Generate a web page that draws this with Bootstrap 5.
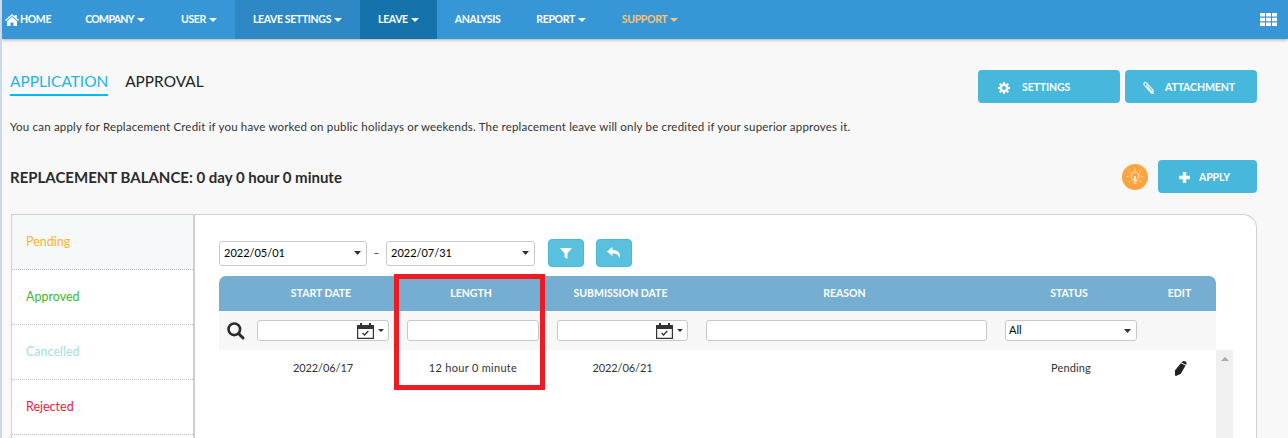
<!DOCTYPE html>
<html lang="en">
<head>
<meta charset="utf-8">
<title>Replacement Leave</title>
<link href="https://cdn.jsdelivr.net/npm/bootstrap@5.3.0/dist/css/bootstrap.min.css" rel="stylesheet">
<style>
html,body{height:438px;overflow:hidden}
body{background:#f8f8f8;font-family:"Lato","Liberation Sans",sans-serif;font-size:11px;color:#333;border-left:2px solid #cdd8ea}
.topbar{height:39px;background:#3797d6;box-shadow:0 1px 3px rgba(0,0,0,.3);padding:0}
.topitem{height:39px;padding:0 18px;color:#fff;font-size:10.5px;letter-spacing:-.35px;font-weight:700;display:flex;align-items:center;gap:3px;text-decoration:none;white-space:nowrap}
.topitem:hover{color:#fff}
.item-home{padding:0 16px 0 3px;gap:1px}
.item-tight{letter-spacing:-.65px}
.item-soft{background:#2e88c6}
.item-strong{background:#1572ab}
.item-gold,.item-gold:hover{color:#f8c471}
.tri{width:0;height:0;border-left:4px solid transparent;border-right:4px solid transparent;border-top:4px solid currentColor}
.appgrid{padding-right:11px}
.pagehead{padding:31px 31px 0 8px}
.tabname{font-size:15.4px;line-height:22px;padding-bottom:2px;color:#222;text-decoration:none}
.tabname.on{color:#1cb4e6;border-bottom:2px solid #00bdf2}
.gap-tab{gap:17px}
.actbtn{height:33px;background:#47b8db;border:0;border-radius:4px;color:#fff;font-size:10.5px;letter-spacing:-.1px;font-weight:700;display:flex;align-items:center;padding:2px 0 0 20px;gap:12px}
.actbtn:hover{background:#47b8db;color:#fff}
.w-settings{width:142px}
.w-attach{width:132px;padding-left:18px;gap:10px}
.w-apply{width:99px;padding-left:21px;gap:9px}
.gap-act{gap:5px}
.infotext{margin:16px 0 0 8px;line-height:16px;font-size:11.5px;letter-spacing:.19px}
.balance{padding:0 31px 0 8px;margin-top:25px;height:33px}
.balance h5{font-size:15px;font-weight:700;margin:0;color:#2b2b2b}
.bulb{width:26px;height:26px;border-radius:50%;background:#fda43f;margin-right:10px}
.panelbox{margin:21px 0 0 9px;width:1246px;height:224px;background:#fff;border:1px solid #d0d0d0;border-bottom:0;border-radius:0 14px 0 0;display:flex}
.sidelist{width:183px;flex:none;border-right:2px solid #d0d0d0;border-radius:0}
.sidelist .list-group-item{height:55px;padding:1px 0 0 14px;border:0;border-bottom:1px dotted #bbb;display:flex;align-items:center;font-size:12.5px;background:transparent;border-radius:0}
.sidelist .list-group-item.cur{background:#f6f9fa}
.sidelist .list-group-item.c-pend{color:#ffb32c}.sidelist .list-group-item.c-appr{color:#3cb82e}.sidelist .list-group-item.c-canc{color:#a6dedb}.sidelist .list-group-item.c-rej{color:#f0193c}
.mainpane{padding:24px 0 0 24px;flex:1;min-width:0}
.filterline{height:28px}
.datepick,.fsel{font-size:11px;border:1px solid #c8c8c8;border-radius:3px;color:#000;background-position:right 5px center;background-size:7px 4px;box-shadow:none;background-image:url("data:image/svg+xml,%3Csvg xmlns='http://www.w3.org/2000/svg' viewBox='0 0 7 4'%3E%3Cpath fill='%23333' d='M0 0h7L3.500 4z'/%3E%3C/svg%3E")}
.datepick{height:25px;padding:0 20px 0 4px}
.fsel{height:21px;padding:0 20px 0 3px}
.w-date{width:148px}
.w-date2{width:149px}
.dash{width:19px;text-align:center;color:#444}
.iconbtn{width:36px;height:28px;padding:0;background:#5bc0de;border:1px solid #46b8da;border-radius:4px;display:flex;align-items:center;justify-content:center}
.iconbtn:hover{background:#5bc0de;border-color:#46b8da}
.first-ic{margin-left:13px}
.second-ic{margin-left:12px}
.tablewrap{width:1014px;margin-top:9px}
.gridline{display:grid;grid-template-columns:20px 132px 132px 131px 281px 132px 61px;column-gap:18px;width:997px;align-items:center;text-align:center}
.headline{height:35px;background:#76aed2;color:#fff;font-weight:700;font-size:10.5px;border-radius:7px 7px 0 0;padding-top:1px}
.headline span{padding-right:4px}
.headline .hd-edit{padding-right:12px}
.searchline{height:39px;background:#f7f7f7}
.datarow{height:36px;color:#333;letter-spacing:.15px;flex:none}
.datecell{letter-spacing:-.1px}
.lengthcell{letter-spacing:.3px}
.bodyrow{display:flex;height:88px}
.rollbar{width:17px;background:#f0f0f0;display:flex;justify-content:center;padding-top:7px}
.rolltri{width:0;height:0;border-left:4px solid transparent;border-right:4px solid transparent;border-bottom:4px solid #aaa}
.fbox{height:21px;border:1px solid #c8c8c8;border-radius:3px;background:#fff;padding:0 4px 0 0}
.tri-dark{width:0;height:0;border-left:3.5px solid transparent;border-right:3.5px solid transparent;border-top:3.5px solid #333}
.redbox{position:absolute;left:394px;top:274px;width:151px;height:116px;border:5px solid #ed1c24;pointer-events:none}
.pen{padding-right:10px}
</style>
</head>
<body>
<nav class="navbar topbar d-flex flex-nowrap justify-content-start align-items-stretch">
  <a class="topitem item-home" href="#"><svg width="14" height="12" viewBox="0 0 14 12"><path fill="#fff" d="M7 0 0 6l.8 1L7 1.900 13.200 7l.8-1-2.200-1.900V1h-2v1.400zM2 7.200V12h3.600V8.400h2.800V12H12V7.200L7 3z"/></svg> HOME</a>
  <a class="topitem item-tight" href="#">COMPANY <i class="tri"></i></a>
  <a class="topitem" href="#">USER <i class="tri"></i></a>
  <a class="topitem item-soft" href="#">LEAVE SETTINGS <i class="tri"></i></a>
  <a class="topitem item-strong" href="#">LEAVE <i class="tri"></i></a>
  <a class="topitem" href="#">ANALYSIS</a>
  <a class="topitem" href="#">REPORT <i class="tri"></i></a>
  <a class="topitem item-gold" href="#">SUPPORT <i class="tri"></i></a>
  <a class="ms-auto d-flex align-items-center appgrid" href="#" aria-label="Apps"><svg width="17" height="13" viewBox="0 0 17 13"><path fill="#fff" d="M0 0h5v3.600H0zM6 0h5v3.600H6zM12 0h5v3.600h-5zM0 4.700h5v3.600H0zM6 4.700h5v3.600H6zM12 4.700h5v3.600h-5zM0 9.400h5V13H0zM6 9.400h5V13H6zM12 9.400h5V13h-5z"/></svg></a>
</nav>

<div class="pagehead d-flex justify-content-between align-items-start">
  <div class="d-flex gap-tab">
    <a class="tabname on" href="#">APPLICATION</a>
    <a class="tabname" href="#">APPROVAL</a>
  </div>
  <div class="d-flex gap-act">
    <button class="btn actbtn w-settings"><svg width="12" height="12" viewBox="0 0 12 12"><circle cx="6" cy="6" r="3.300" fill="none" stroke="#fff" stroke-width="2.600"/><path stroke="#fff" stroke-width="2" d="M6 0v2M6 10v2M0 6h2M10 6h2M1.700 1.700l1.400 1.400M8.900 8.900l1.400 1.400M1.700 10.300l1.400-1.400M8.900 3.100l1.400-1.400"/></svg>SETTINGS</button>
    <button class="btn actbtn w-attach"><svg width="12" height="12" viewBox="0 0 12 12"><path fill="none" stroke="#fff" stroke-width="1.100" d="M10.800 10.800c-.8.800-1.900.7-2.700-.2L1.500 3.500C.6 2.500.7 1.500 1.300 1s1.700-.6 2.500.3l6 6.500c.6.700.6 1.300.2 1.700s-1 .4-1.600-.2L3.200 3.100"/></svg>ATTACHMENT</button>
  </div>
</div>

<p class="infotext">You can apply for Replacement Credit if you have worked on public holidays or weekends. The replacement leave will only be credited if your superior approves it.</p>

<div class="balance d-flex justify-content-between align-items-center">
  <h5>REPLACEMENT BALANCE: 0 day 0 hour 0 minute</h5>
  <div class="d-flex align-items-center">
    <div class="bulb d-flex align-items-center justify-content-center"><svg width="20" height="20" viewBox="0 0 20 20"><path fill="none" stroke="#ffe9c8" stroke-width="1" d="M8.300 13.500c0-1-.5-1.500-1-2A3.800 3.800 0 0 1 10 5a3.800 3.800 0 0 1 2.700 6.500c-.5.500-1 1-1 2z"/><path fill="#ffe9c8" d="M8.300 14.200h3.400v1.100H8.300zM8.800 15.900h2.400v1.100H8.800zM9 9h2v4.500H9z"/><path stroke="#ffe9c8" stroke-width=".9" d="M10 1.500v2.300M3.800 4l1.700 1.600M16.200 4l-1.700 1.600M1.800 9.500h2.300M15.900 9.500h2.300M3.800 15l1.600-1.400M16.200 15l-1.600-1.400"/></svg></div>
    <button class="btn actbtn w-apply"><svg width="11" height="11" viewBox="0 0 11 11"><path fill="#fff" d="M3.800 0h3.400v3.800H11v3.400H7.200V11H3.800V7.200H0V3.800h3.800z"/></svg>APPLY</button>
  </div>
</div>

<section class="panelbox">
  <div class="list-group sidelist">
    <a class="list-group-item cur c-pend" href="#">Pending</a>
    <a class="list-group-item c-appr" href="#">Approved</a>
    <a class="list-group-item c-canc" href="#">Cancelled</a>
    <a class="list-group-item c-rej" href="#">Rejected</a>
  </div>
  <div class="mainpane">
    <div class="d-flex align-items-center filterline">
      <select class="form-select datepick w-date"><option>2022/05/01</option></select>
      <span class="dash">–</span>
      <select class="form-select datepick w-date2"><option>2022/07/31</option></select>
      <button class="btn iconbtn first-ic" aria-label="Filter"><svg width="12" height="12" viewBox="0 0 12 12"><path fill="#fff" d="M0 1h12L7.400 6.400V12L4.600 10V6.400z"/></svg></button>
      <button class="btn iconbtn second-ic" aria-label="Back"><svg width="14" height="12" viewBox="0 0 14 12"><path fill="#fff" d="M5.500 0 0 4.600l5.500 4.600V6.400c3.500 0 5.800.6 6.700 5.100 1.500-4 .5-8.300-6.700-8.500z"/></svg></button>
    </div>
    <div class="tablewrap">
      <div class="gridline headline">
        <span></span><span>START DATE</span><span>LENGTH</span><span>SUBMISSION DATE</span><span>REASON</span><span>STATUS</span><span class="hd-edit">EDIT</span>
      </div>
      <div class="gridline searchline">
        <svg class="ms-2" width="18" height="18" viewBox="0 0 18 18"><circle cx="7.300" cy="7.300" r="5.800" fill="none" stroke="#2b2b2b" stroke-width="2.600"/><path stroke="#2b2b2b" stroke-width="3" stroke-linecap="round" d="M11.800 11.800 16 16"/></svg>
        <div class="fbox d-flex align-items-center justify-content-end gap-1"><svg width="17" height="16" viewBox="0 0 17 16"><path fill="#333" d="M0 2h3V0h2v2h7V0h2v2h3v14H0zm1.200 4v8.800h14.600V6z"/><path fill="none" stroke="#333" stroke-width="1.300" d="M5.500 10l2 2 3.800-4"/></svg><i class="tri-dark"></i></div>
        <input class="fbox" type="text" aria-label="Length">
        <div class="fbox d-flex align-items-center justify-content-end gap-1"><svg width="17" height="16" viewBox="0 0 17 16"><path fill="#333" d="M0 2h3V0h2v2h7V0h2v2h3v14H0zm1.200 4v8.800h14.600V6z"/><path fill="none" stroke="#333" stroke-width="1.300" d="M5.500 10l2 2 3.800-4"/></svg><i class="tri-dark"></i></div>
        <input class="fbox" type="text" aria-label="Reason">
        <select class="form-select fsel"><option>All</option></select>
        <span></span>
      </div>
      <div class="bodyrow">
        <div class="gridline datarow">
          <span></span><span class="datecell">2022/06/17</span><span class="lengthcell">12 hour 0 minute</span><span class="datecell">2022/06/21</span><span></span><span>Pending</span>
          <span class="pen"><svg width="13" height="15" viewBox="0 0 13 15"><path fill="#222" d="M8.700.5c.9-.6 2-.5 2.900.1s1.200 1.500.9 2.300l-.5.900-4.700-2.400zM6.800 2.200l4.700 2.400-4.600 8.200L2 15l-1-.6-.1-5z"/></svg></span>
        </div>
        <div class="rollbar"><i class="rolltri"></i></div>
      </div>
    </div>
  </div>
</section>
<div class="redbox"></div>
<script src="https://cdn.jsdelivr.net/npm/bootstrap@5.3.0/dist/js/bootstrap.bundle.min.js"></script>
</body>
</html>
